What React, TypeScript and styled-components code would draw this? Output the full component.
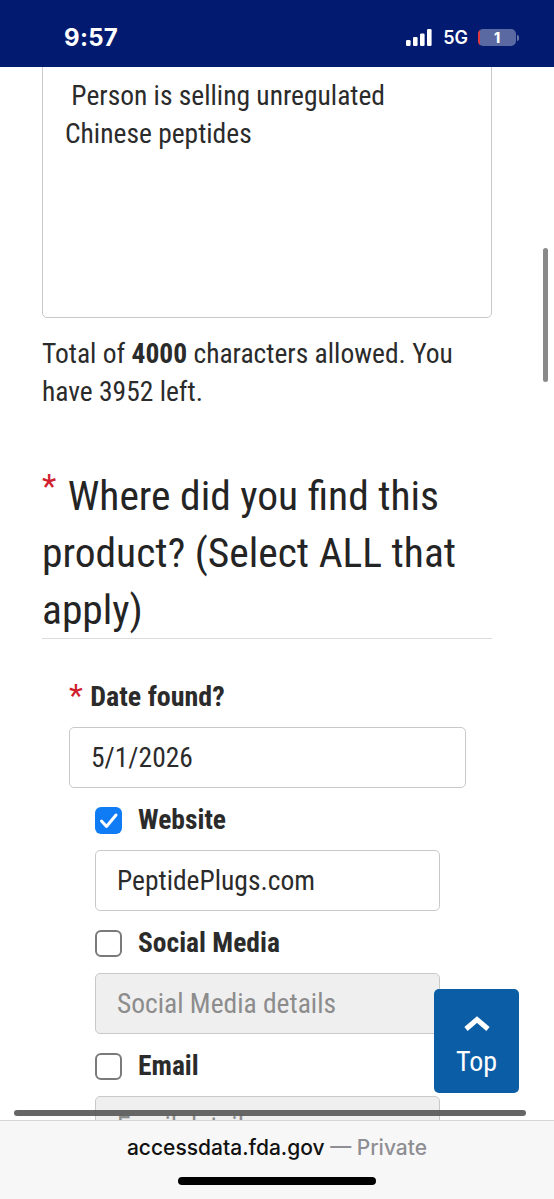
import React from 'react';
import styled, { createGlobalStyle } from 'styled-components';

const FORM_FONT = `'Roboto Condensed', 'Liberation Sans Narrow', sans-serif`;
const SYSTEM_FONT = `Inter, 'Liberation Sans', sans-serif`;

const GlobalStyle = createGlobalStyle`
  html, body { margin: 0; padding: 0; background: #fff; }
  body { font-family: ${FORM_FONT}; color: #2b2b2b; }
  * { box-sizing: border-box; }
`;

const Screen = styled.div`
  width: 554px;
  height: 1199px;
  display: flex;
  flex-direction: column;
  overflow: hidden;
  background: #fff;
`;

/* ---------- iOS status bar ---------- */

const StatusBar = styled.header`
  flex: 0 0 67px;
  display: flex;
  align-items: center;
  justify-content: space-between;
  padding: 8px 35px 0 64px;
  background: #021a70;
  color: #fff;
  font-family: ${SYSTEM_FONT};
`;

const Clock = styled.span`
  font-size: 24px;
  font-weight: 700;
  letter-spacing: 0.3px;
  line-height: 24px;
`;

const StatusIcons = styled.div`
  display: flex;
  align-items: center;
`;

const NetworkLabel = styled.span`
  margin: 0 10px 0 11px;
  font-size: 18px;
  font-weight: 600;
  line-height: 20px;
`;

const Battery = styled.div`
  position: relative;
  width: 38px;
  height: 17px;
  border-radius: 5px;
  background: rgba(255, 255, 255, 0.35);
  display: flex;
  align-items: center;
  justify-content: center;
  overflow: hidden;
  font-size: 14px;
  font-weight: 800;
  line-height: 17px;
`;

const BatteryLevel = styled.span`
  position: absolute;
  left: 0;
  top: 0;
  bottom: 0;
  width: 2px;
  background: #e0393e;
`;

const BatteryCap = styled.span`
  width: 2px;
  height: 6px;
  margin-left: 1px;
  border-radius: 0 2px 2px 0;
  background: rgba(255, 255, 255, 0.4);
`;

const SignalIcon = () => (
  <svg width="26" height="17" viewBox="0 0 26 17" fill="#fff">
    <rect x="0" y="11" width="4.6" height="6" rx="1.2" />
    <rect x="7" y="8" width="4.6" height="9" rx="1.2" />
    <rect x="14" y="4.5" width="4.6" height="12.5" rx="1.2" />
    <rect x="21" y="0" width="4.6" height="17" rx="1.2" />
  </svg>
);

/* ---------- page ---------- */

const Viewport = styled.main`
  position: relative;
  flex: 1 1 auto;
  overflow: hidden;
`;

const Page = styled.div`
  margin-top: -11px;
  padding: 0 62px 0 42px;
`;

const DescriptionBox = styled.textarea`
  display: block;
  width: 100%;
  height: 262px;
  margin: 0;
  padding: 20px 20px 20px 22px;
  border: 1px solid #c9c9c9;
  border-radius: 5px;
  resize: none;
  font-family: ${FORM_FONT};
  font-size: 27.5px;
  line-height: 38px;
  color: #2b2b2b;
  background: #fff;
  white-space: pre-wrap;
`;

const CharCount = styled.p`
  margin: 17px 0 0;
  font-size: 27.5px;
  line-height: 38px;
  color: #2b2b2b;
`;

const Strong = styled.strong`
  font-weight: 700;
`;

const QuestionHeading = styled.h2`
  margin: 56px 0 0;
  padding-bottom: 0;
  border-bottom: 1px solid #dcdcdc;
  font-size: 41.5px;
  font-weight: 400;
  line-height: 57px;
  color: #242424;
`;

const Required = styled.span<{ $size: number; $raise: number; $gap: number }>`
  margin-right: ${(p) => p.$gap}px;
  color: #d0202e;
  font-size: ${(p) => p.$size}px;
  font-weight: 400;
  vertical-align: ${(p) => p.$raise}px;
  line-height: 0;
`;

const FieldGroup = styled.div<{ $indent: number }>`
  margin-left: ${(p) => p.$indent}px;
`;

const FieldLabel = styled.label`
  display: block;
  margin-top: 42px;
  font-size: 28px;
  font-weight: 700;
  line-height: 32px;
  color: #2b2b2b;
`;

const TextField = styled.input<{ $width: number }>`
  display: block;
  width: ${(p) => p.$width}px;
  height: 61px;
  margin: 14px 0 0;
  padding: 0 21px;
  border: 1px solid #c9c9c9;
  border-radius: 5px;
  font-family: ${FORM_FONT};
  font-size: 27.5px;
  color: #2b2b2b;
  background: #fff;

  &:disabled {
    background: #efefef;
  }

  &::placeholder {
    color: #8c8c8c;
    opacity: 1;
  }
`;

const OptionRow = styled.label`
  display: flex;
  align-items: center;
  gap: 16px;
  height: 32px;
  margin-top: 16px;
`;

const CheckBox = styled.span<{ $checked: boolean }>`
  display: inline-flex;
  align-items: center;
  justify-content: center;
  width: 27px;
  height: 27px;
  flex: 0 0 27px;
  border-radius: 6px;
  border: ${(p) => (p.$checked ? 'none' : '2px solid #7a7a7a')};
  background: ${(p) => (p.$checked ? '#0f7bf5' : '#fff')};
`;

const OptionText = styled.span`
  font-size: 27.5px;
  font-weight: 700;
  line-height: 32px;
  color: #2b2b2b;
`;

const VerticalThumb = styled.div`
  position: absolute;
  left: 543px;
  top: 181px;
  width: 5px;
  height: 134px;
  border-radius: 3px;
  background: #8a8a8a;
`;

const HorizontalThumb = styled.div`
  position: absolute;
  left: 14px;
  top: 1043px;
  width: 512px;
  height: 6px;
  border-radius: 3px;
  background: rgba(85, 85, 85, 0.9);
`;

const TopButton = styled.button`
  position: absolute;
  left: 434px;
  top: 922px;
  width: 85px;
  height: 104px;
  display: flex;
  flex-direction: column;
  align-items: center;
  padding: 27px 0 0;
  border: none;
  border-radius: 5px;
  background: #0b5ea6;
  color: #fff;
  font-family: ${FORM_FONT};
  font-size: 28px;
  line-height: 30px;
  cursor: pointer;
`;

const TopLabel = styled.span`
  margin-top: 15px;
`;

/* ---------- Safari bottom bar ---------- */

const BrowserBar = styled.footer`
  flex: 0 0 79px;
  display: flex;
  flex-direction: column;
  align-items: center;
  padding-top: 15px;
  border-top: 1px solid #d6d6d6;
  background: #f7f7f7;
  font-family: ${SYSTEM_FONT};
`;

const Address = styled.div`
  font-size: 21px;
  font-weight: 500;
  line-height: 24px;
  color: #111;
`;

const PrivateTag = styled.span`
  color: #8e8e93;
`;

const HomeIndicator = styled.div`
  width: 198px;
  height: 8px;
  margin-top: 17px;
  border-radius: 4px;
  background: #000;
`;

const CheckMark = () => (
  <svg width="27" height="27" viewBox="0 0 27 27" fill="none">
    <polyline
      points="6.5,14 11.5,19.5 21,8"
      stroke="#fff"
      strokeWidth="3"
      strokeLinecap="round"
      strokeLinejoin="round"
    />
  </svg>
);

const ChevronUp = () => (
  <svg width="28" height="16" viewBox="0 0 28 16" fill="none">
    <polyline points="3,13 14,3.5 25,13" stroke="#fff" strokeWidth="5" strokeLinejoin="miter" />
  </svg>
);

interface SourceOption {
  label: string;
  checked: boolean;
  value: string;
  placeholder: string;
}

const sources: SourceOption[] = [
  { label: 'Website', checked: true, value: 'PeptidePlugs.com', placeholder: 'Website details' },
  { label: 'Social Media', checked: false, value: '', placeholder: 'Social Media details' },
  { label: 'Email', checked: false, value: '', placeholder: 'Email details' },
];

export default function App() {
  return (
    <Screen>
      <GlobalStyle />
      <StatusBar>
        <Clock>9:57</Clock>
        <StatusIcons>
          <SignalIcon />
          <NetworkLabel>5G</NetworkLabel>
          <Battery>
            <BatteryLevel />1
          </Battery>
          <BatteryCap />
        </StatusIcons>
      </StatusBar>

      <Viewport>
        <Page>
          <DescriptionBox readOnly value={' Person is selling unregulated\nChinese peptides'} />
          <CharCount>
            Total of <Strong>4000</Strong> characters allowed. You have 3952 left.
          </CharCount>

          <QuestionHeading>
            <Required $size={33} $raise={12} $gap={2}>*</Required> Where did you find this product? (Select ALL
            that apply)
          </QuestionHeading>

          <FieldGroup $indent={27}>
            <FieldLabel>
              <Required $size={32} $raise={0} $gap={1}>*</Required> Date found?
            </FieldLabel>
            <TextField $width={397} readOnly value="5/1/2026" />

            <FieldGroup $indent={26}>
              {sources.map((s) => (
                <React.Fragment key={s.label}>
                  <OptionRow>
                    <CheckBox $checked={s.checked}>{s.checked && <CheckMark />}</CheckBox>
                    <OptionText>{s.label}</OptionText>
                  </OptionRow>
                  <TextField
                    $width={345}
                    readOnly
                    disabled={!s.checked}
                    value={s.value}
                    placeholder={s.placeholder}
                  />
                </React.Fragment>
              ))}
            </FieldGroup>
          </FieldGroup>
        </Page>

        <VerticalThumb />
        <TopButton type="button">
          <ChevronUp />
          <TopLabel>Top</TopLabel>
        </TopButton>
        <HorizontalThumb />
      </Viewport>

      <BrowserBar>
        <Address>
          accessdata.fda.gov <PrivateTag>— Private</PrivateTag>
        </Address>
        <HomeIndicator />
      </BrowserBar>
    </Screen>
  );
}
